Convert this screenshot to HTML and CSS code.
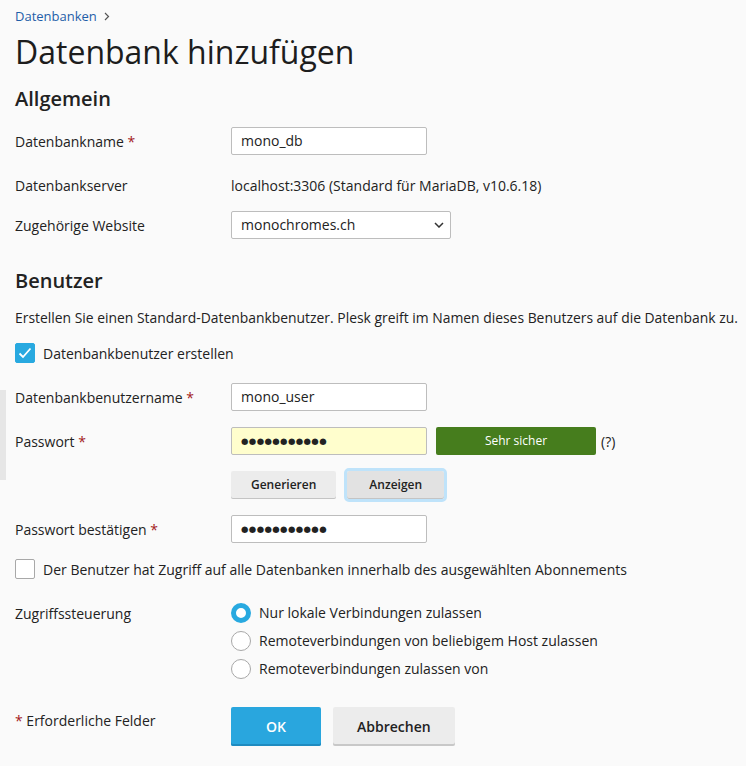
FILE: index.html
```html
<!DOCTYPE html>
<html lang="de">
<head>
<meta charset="utf-8">
<title>Datenbank hinzufügen</title>
<link rel="stylesheet" href="styles.css">
</head>
<body>
<div class="handle"></div>
<main class="page">
  <nav class="breadcrumb"><a href="#">Datenbanken</a><svg class="sep" width="6" height="9" viewBox="0 0 6 9"><path d="M1 1l3.5 3.5L1 8" fill="none" stroke="#555" stroke-width="1.2"/></svg></nav>
  <h1 class="title">Datenbank hinzufügen</h1>

  <h2 class="section">Allgemein</h2>
  <div class="row">
    <label class="label">Datenbankname <span class="req">*</span></label>
    <div class="field"><div class="input">mono_db</div></div>
  </div>
  <div class="row row-static">
    <div class="label">Datenbankserver</div>
    <div class="field">localhost:3306 (Standard für MariaDB, v10.6.18)</div>
  </div>
  <div class="row">
    <label class="label">Zugehörige Website</label>
    <div class="field">
      <div class="select">monochromes.ch
        <svg class="chev" width="10" height="6" viewBox="0 0 10 6"><path d="M1 1l4 4 4-4" fill="none" stroke="#333" stroke-width="1.5"/></svg>
      </div>
    </div>
  </div>

  <h2 class="section section-users">Benutzer</h2>
  <p class="desc">Erstellen Sie einen Standard-Datenbankbenutzer. Plesk greift im Namen dieses Benutzers auf die Datenbank zu.</p>
  <div class="check-row">
    <span class="checkbox checked"><svg width="14" height="12" viewBox="0 0 14 12"><path d="M1.5 6.5l3.5 3.5 7.5-8.5" fill="none" stroke="#fff" stroke-width="1.8"/></svg></span>
    <span class="check-label">Datenbankbenutzer erstellen</span>
  </div>

  <div class="row row-first">
    <label class="label">Datenbankbenutzername <span class="req">*</span></label>
    <div class="field"><div class="input">mono_user</div></div>
  </div>
  <div class="row">
    <label class="label">Passwort <span class="req">*</span></label>
    <div class="field pw">
      <div class="input input-pw dots">●●●●●●●●●●●</div>
      <div class="strength">Sehr sicher</div>
      <span class="help">(?)</span>
    </div>
  </div>
  <div class="row">
    <div class="label"></div>
    <div class="field btns">
      <button class="btn">Generieren</button>
      <button class="btn btn-focus">Anzeigen</button>
    </div>
  </div>
  <div class="row">
    <label class="label">Passwort bestätigen <span class="req">*</span></label>
    <div class="field"><div class="input dots">●●●●●●●●●●●</div></div>
  </div>
  <div class="check-row check-row-2">
    <span class="checkbox"></span>
    <span class="check-label">Der Benutzer hat Zugriff auf alle Datenbanken innerhalb des ausgewählten Abonnements</span>
  </div>

  <div class="row row-radios">
    <div class="label">Zugriffssteuerung</div>
    <div class="field radios">
      <div class="radio-row"><span class="radio on"></span>Nur lokale Verbindungen zulassen</div>
      <div class="radio-row"><span class="radio"></span>Remoteverbindungen von beliebigem Host zulassen</div>
      <div class="radio-row"><span class="radio"></span>Remoteverbindungen zulassen von</div>
    </div>
  </div>

  <div class="row row-actions">
    <div class="label"><span class="req">*</span> Erforderliche Felder</div>
    <div class="field actions">
      <button class="btn-lg btn-primary">OK</button>
      <button class="btn-lg">Abbrechen</button>
    </div>
  </div>
</main>
</body>
</html>
```
FILE: styles.css
```css
html, body {
  margin: 0;
  padding: 0;
  background: #fafafa;
}
body {
  font-family: "Open Sans", "DejaVu Sans", sans-serif;
  color: #222;
  font-size: 14px;
  overflow: hidden;
}
.handle {
  position: absolute;
  left: 0;
  top: 390px;
  width: 6px;
  height: 90px;
  background: #e6e6e6;
}
.page {
  padding: 0 15px;
}
.breadcrumb {
  display: flex;
  align-items: center;
  padding-top: 7px;
  font-size: 13px;
  line-height: 18px;
}
.breadcrumb a {
  color: #1f5ea8;
  text-decoration: none;
}
.breadcrumb .sep {
  margin-left: 7px;
}
.title {
  margin: 7px 0 0;
  font-size: 32px;
  font-weight: 400;
  line-height: 40px;
  color: #1d1d1d;
}
.section {
  margin: 14px 0 15px;
  font-size: 20px;
  font-weight: 600;
  line-height: 26px;
}
.section-users {
  margin: 29px 0 15px;
}
.row {
  display: grid;
  grid-template-columns: 216px auto;
  align-items: center;
  min-height: 28px;
  margin-top: 16px;
}
.section + .row {
  margin-top: 0;
}
.row-static {
  min-height: 20px;
  margin-top: 20px;
}
.row-static + .row {
  margin-top: 16px;
}
.row-first {
  margin-top: 20px;
}
.req {
  color: #a3191c;
}
.field {
  display: flex;
  align-items: center;
}
.input {
  box-sizing: border-box;
  width: 196px;
  height: 28px;
  border: 1px solid #bdbdbd;
  border-radius: 2px;
  background: #fff;
  padding: 0 9px;
  line-height: 26px;
}
.dots {
  font-size: 8.5px;
  letter-spacing: 0.4px;
}
.input-pw {
  background: #fffecd;
}
.select {
  box-sizing: border-box;
  width: 220px;
  height: 28px;
  border: 1px solid #bdbdbd;
  border-radius: 2px;
  background: #fff;
  padding: 0 6px 0 9px;
  line-height: 26px;
  display: flex;
  align-items: center;
  justify-content: space-between;
}
.strength {
  box-sizing: border-box;
  width: 160px;
  height: 28px;
  margin-left: 9px;
  background: #467d1d;
  border-radius: 2px;
  color: #fff;
  font-size: 12px;
  line-height: 28px;
  text-align: center;
}
.help {
  margin-left: 5px;
  font-size: 14px;
}
.desc {
  margin: 0 -15px 0 0;
  font-size: 13.9px;
  line-height: 18px;
  white-space: nowrap;
}
.check-row {
  display: flex;
  align-items: center;
  margin-top: 16px;
}
.check-row-2 {
  margin-top: 16px;
}
.checkbox {
  box-sizing: border-box;
  width: 20px;
  height: 20px;
  border: 1px solid #a8a8a8;
  border-radius: 2px;
  background: #fff;
  display: inline-flex;
  align-items: center;
  justify-content: center;
  flex: none;
}
.checkbox.checked {
  background: #28a9e0;
  border-color: #28a9e0;
}
.check-label {
  margin-left: 8px;
}
.btns {
  gap: 11px;
}
.btn {
  box-sizing: border-box;
  height: 28px;
  padding: 0 20px;
  border: 0;
  border-radius: 2px;
  background: #ececec;
  box-shadow: inset 0 -1px 0 #c4c4c4;
  font: 600 12px/28px "Open Sans", sans-serif;
  color: #222;
}
.btn-focus {
  padding: 0 22px;
  background: #e2e2e2;
  outline: 3px solid #bfe3fa;
}
.row-radios {
  align-items: start;
  margin-top: 24px;
}
.row-radios .label {
  padding-top: 1px;
  line-height: 20px;
}
.radios {
  flex-direction: column;
  align-items: flex-start;
  gap: 8px;
}
.radio-row {
  display: flex;
  align-items: center;
  line-height: 20px;
}
.radio {
  box-sizing: border-box;
  width: 20px;
  height: 20px;
  border-radius: 50%;
  border: 1px solid #a8a8a8;
  background: #fff;
  margin-right: 8px;
}
.radio.on {
  border: 5px solid #28a9e0;
}
.row-actions {
  margin-top: 28px;
  align-items: start;
}
.row-actions .label {
  padding-top: 4px;
}
.actions {
  gap: 12px;
}
.btn-lg {
  box-sizing: border-box;
  height: 39px;
  padding: 0 24px;
  border: 0;
  border-radius: 2px;
  background: #ececec;
  box-shadow: inset 0 -2px 0 #c8c8c8;
  font: 600 14px/39px "Open Sans", sans-serif;
  color: #222;
}
.btn-primary {
  width: 90px;
  background: #29a6de;
  box-shadow: inset 0 -2px 0 #1e8bc0;
  color: #fff;
}
```
